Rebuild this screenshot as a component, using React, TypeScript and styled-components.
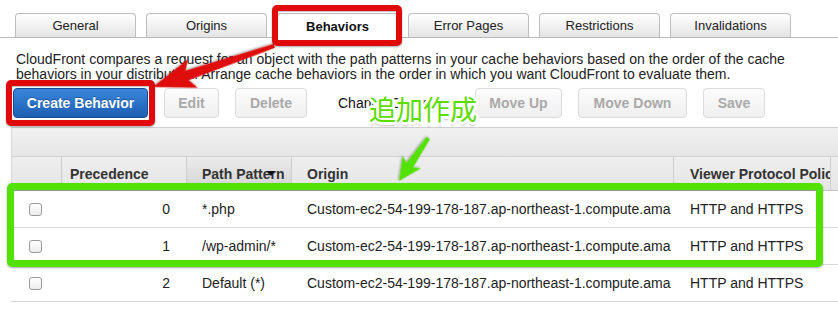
import React from "react";
import styled, { createGlobalStyle, css } from "styled-components";

const Global = createGlobalStyle`
  html, body { margin: 0; padding: 0; background: #fff; }
  body { font-family: "Liberation Sans", Arial, Helvetica, sans-serif; color: #222; }
`;

const Page = styled.div`
  position: relative;
  width: 838px;
  height: 311px;
  overflow: hidden;
  background: #fff;
`;

const TabBar = styled.div`
  display: flex;
  align-items: flex-end;
  gap: 10px;
  box-sizing: border-box;
  height: 38px;
  padding: 13px 0 0 15px;
  border-bottom: 1px solid #b9b9b9;
`;

const Tab = styled.div<{ $active?: boolean }>`
  box-sizing: border-box;
  width: 121px;
  height: 24px;
  display: flex;
  align-items: center;
  justify-content: center;
  font-size: 13px;
  color: #222;
  border: 1px solid #bdbdbd;
  border-bottom: none;
  border-radius: 4px 4px 0 0;
  background: linear-gradient(#ffffff, #e4e4e4);
  ${(p) =>
    p.$active &&
    css`
      background: #fff;
      font-weight: bold;
      color: #111;
      height: 25px;
      margin-bottom: -1px;
    `}
`;

const Description = styled.p`
  margin: 14px 0 0 16px;
  width: 800px;
  font-size: 14px;
  line-height: 15px;
  color: #222;
`;

const Toolbar = styled.div`
  display: flex;
  align-items: center;
  gap: 16px;
  height: 30px;
  margin: 6px 0 0 13px;
`;

const Button = styled.div<{ $primary?: boolean; $w: number }>`
  box-sizing: border-box;
  width: ${(p) => p.$w}px;
  height: 30px;
  display: flex;
  align-items: center;
  justify-content: center;
  font-size: 14px;
  font-weight: bold;
  border-radius: 4px;
  ${(p) =>
    p.$primary
      ? css`
          color: #fff;
          background: linear-gradient(#3a86dc, #1d5fb3);
          border: 1px solid #1a4e93;
          text-shadow: 0 -1px 0 rgba(0, 0, 0, 0.3);
        `
      : css`
          color: #a9a9a9;
          background: linear-gradient(#fcfcfc, #efefef);
          border: 1px solid #dcdcdc;
        `}
`;

const OrderLabel = styled.div`
  box-sizing: border-box;
  width: 136px;
  padding-left: 15px;
  font-size: 14px;
  color: #111;
  white-space: nowrap;
`;

const Table = styled.div`
  margin: 9px 0 0 11px;
  width: 879px;
`;

const Band = styled.div`
  height: 28px;
  border-top: 1px solid #cfcfcf;
  border-left: 1px solid #d6d6d6;
  background: linear-gradient(#f1f1f1, #e6e6e6);
`;

const COLS = "50px 125px 105px 382px 157px 60px";

const HeadRow = styled.div`
  display: grid;
  grid-template-columns: ${COLS};
  box-sizing: border-box;
  height: 35px;
  border-top: 1px solid #d2d2d2;
  border-bottom: 1px solid #c4c4c4;
`;

const HeadCell = styled.div<{ $pad?: number; $sorted?: boolean; $first?: boolean }>`
  position: relative;
  display: flex;
  align-items: center;
  padding-left: ${(p) => p.$pad ?? 0}px;
  font-size: 14px;
  font-weight: bold;
  color: #333;
  white-space: nowrap;
  overflow: hidden;
  border-left: 1px solid ${(p) => (p.$first ? "#d6d6d6" : "#cdcdcd")};
  background: ${(p) =>
    p.$sorted ? "linear-gradient(#ebebeb, #d3d3d3)" : "linear-gradient(#eeeeee, #e6e6e6)"};
`;

const SortArrow = styled.span`
  position: absolute;
  left: 80px;
  top: 14px;
  width: 0;
  height: 0;
  border-left: 4px solid transparent;
  border-right: 4px solid transparent;
  border-top: 5px solid #111;
`;

const Row = styled.div`
  display: grid;
  grid-template-columns: ${COLS};
  height: 37px;
  box-sizing: border-box;
  border-bottom: 1px solid #d8d8d8;
`;

const Cell = styled.div<{ $pad?: number; $right?: boolean; $center?: boolean }>`
  display: flex;
  align-items: center;
  justify-content: ${(p) => (p.$center ? "center" : p.$right ? "flex-end" : "flex-start")};
  padding: 0 ${(p) => (p.$right ? p.$pad ?? 0 : 2)}px 0 ${(p) => (p.$right ? 0 : p.$pad ?? 0)}px;
  font-size: 14px;
  color: #222;
  white-space: nowrap;
  overflow: hidden;
`;

const Checkbox = styled.span`
  box-sizing: border-box;
  width: 13px;
  height: 13px;
  border: 1px solid #9a9a9a;
  border-radius: 3px;
  background: linear-gradient(#ffffff, #ececec);
`;

const Clip = styled.span`
  overflow: hidden;
  display: block;
`;

/* annotations (drawn over the page) */
const Highlight = styled.div<{ $color: string; $x: number; $y: number; $w: number; $h: number; $bw: number }>`
  position: absolute;
  left: ${(p) => p.$x}px;
  top: ${(p) => p.$y}px;
  width: ${(p) => p.$w}px;
  height: ${(p) => p.$h}px;
  box-sizing: border-box;
  border: ${(p) => p.$bw}px solid ${(p) => p.$color};
  border-radius: 5px;
  box-shadow: 0 1px 2px rgba(0, 0, 0, 0.35), inset 0 1px 1px rgba(0, 0, 0, 0.25);
  pointer-events: none;
`;

const Note = styled.div`
  position: absolute;
  left: 369px;
  top: 94px;
  font-family: "Noto Sans CJK JP", "Noto Sans CJK SC", sans-serif;
  font-size: 27px;
  line-height: 30px;
  font-weight: 400;
  color: #5ddc00;
  text-shadow:
    2px 0 0 #fff, -2px 0 0 #fff, 0 2px 0 #fff, 0 -2px 0 #fff,
    2px 2px 0 #fff, -2px -2px 0 #fff, 2px -2px 0 #fff, -2px 2px 0 #fff,
    3px 0 0 #fff, -3px 0 0 #fff, 0 3px 0 #fff, 0 -3px 0 #fff,
    0 4px 2px rgba(0, 0, 0, 0.25);
`;

const Arrows = styled.svg`
  position: absolute;
  left: 0;
  top: 0;
  pointer-events: none;
`;

const rows = [
  { p: "0", path: "*.php" },
  { p: "1", path: "/wp-admin/*" },
  { p: "2", path: "Default (*)" },
];

const origin = "Custom-ec2-54-199-178-187.ap-northeast-1.compute.amazonaws.com";

export default function App() {
  return (
    <Page>
      <Global />
      <TabBar>
        <Tab>General</Tab>
        <Tab>Origins</Tab>
        <Tab $active>Behaviors</Tab>
        <Tab>Error Pages</Tab>
        <Tab>Restrictions</Tab>
        <Tab>Invalidations</Tab>
      </TabBar>
      <Description>
        CloudFront compares a request for an object with the path patterns in your cache behaviors based on the order of the cache
        behaviors in your distribution. Arrange cache behaviors in the order in which you want CloudFront to evaluate them.
      </Description>
      <Toolbar>
        <Button $primary $w={135}>Create Behavior</Button>
        <Button $w={55}>Edit</Button>
        <Button $w={72}>Delete</Button>
        <OrderLabel>Change Order:</OrderLabel>
        <Button $w={87}>Move Up</Button>
        <Button $w={109}>Move Down</Button>
        <Button $w={62}>Save</Button>
      </Toolbar>
      <Table>
        <Band />
        <HeadRow>
          <HeadCell $first />
          <HeadCell $pad={8}>Precedence</HeadCell>
          <HeadCell $pad={15} $sorted>
            Path Pattern
            <SortArrow />
          </HeadCell>
          <HeadCell $pad={15}>Origin</HeadCell>
          <HeadCell $pad={16}>Viewer Protocol Policy</HeadCell>
          <HeadCell />
        </HeadRow>
        {rows.map((r) => (
          <Row key={r.p}>
            <Cell $center>
              <Checkbox />
            </Cell>
            <Cell $right $pad={16}>{r.p}</Cell>
            <Cell $pad={16}>{r.path}</Cell>
            <Cell $pad={16}>
              <Clip>{origin}</Clip>
            </Cell>
            <Cell $pad={17}>HTTP and HTTPS</Cell>
            <Cell />
          </Row>
        ))}
      </Table>

      <Highlight $color="#e00a0a" $x={272} $y={5} $w={130} $h={41} $bw={6} />
      <Highlight $color="#e00a0a" $x={6} $y={80} $w={149} $h={46} $bw={6} />
      <Highlight $color="#52e100" $x={7} $y={183} $w={816} $h={84} $bw={7} />

      <Note>追加作成</Note>

      <Arrows width="838" height="311" viewBox="0 0 838 311">
        <defs>
          <filter id="sh" x="-20%" y="-20%" width="140%" height="140%">
            <feDropShadow dx="0" dy="1" stdDeviation="1" floodColor="#000" floodOpacity="0.4" />
          </filter>
        </defs>
        <g transform="translate(153 87) rotate(161.3)" filter="url(#sh)">
          <polygon points="-128,-2 -36,-5 -42,-15 0,0 -42,15 -36,5 -128,2" fill="#e00a0a" />
        </g>
        <g transform="translate(399 181) rotate(124.3)" filter="url(#sh)">
          <polygon points="-52,-2 -19,-4 -23,-11 0,0 -23,11 -19,4 -52,2" fill="#52e100" />
        </g>
      </Arrows>
    </Page>
  );
}
